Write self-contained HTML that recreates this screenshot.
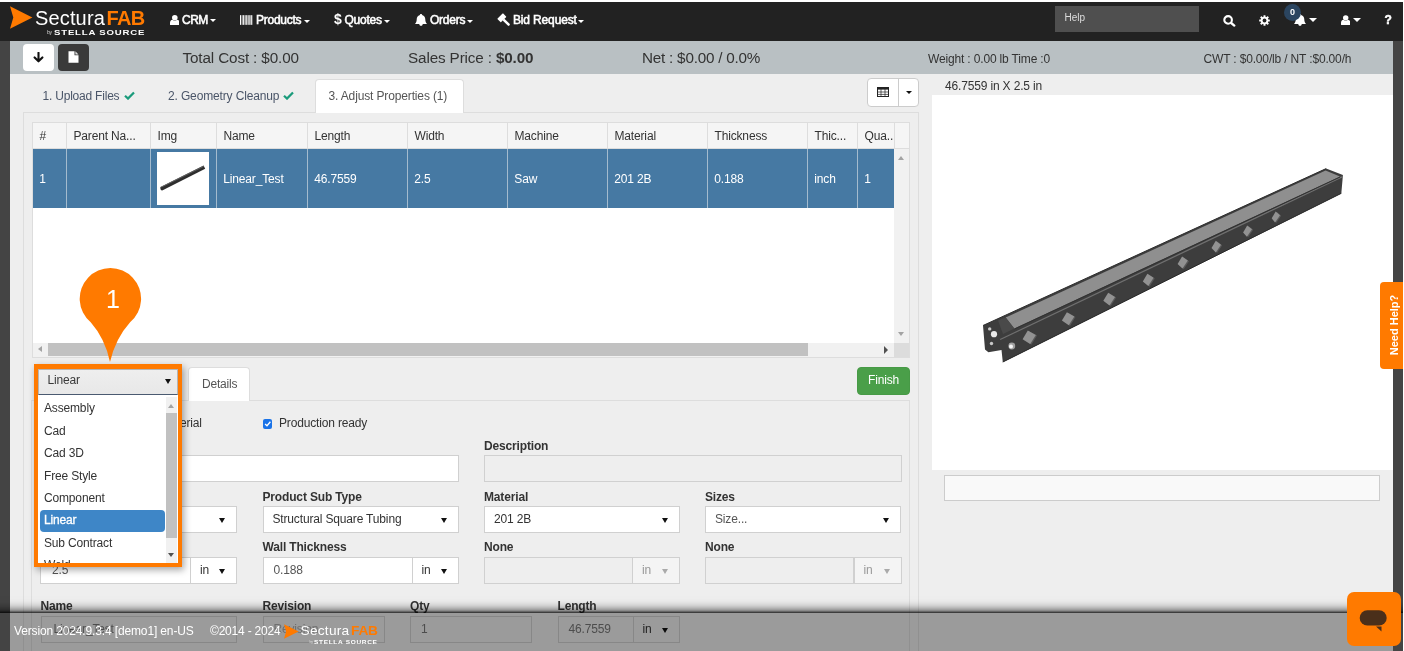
<!DOCTYPE html>
<html>
<head>
<meta charset="utf-8">
<title>SecturaFAB</title>
<style>
*{box-sizing:border-box;margin:0;padding:0}
html,body{width:1404px;height:651px;overflow:hidden;background:#fff}
body{font-family:"Liberation Sans",sans-serif;font-size:12px;color:#333;position:relative;letter-spacing:-0.16px}
.abs{position:absolute}
#page{position:absolute;left:0;top:2px;width:1403px;height:649px;background:#444;overflow:hidden}
#nav{position:absolute;left:0;top:0;width:1403px;height:39px;background:#222}
#main{position:absolute;left:10px;top:39px;width:1383px;height:610px;background:#eee}
#c{position:absolute;left:0;top:-2px;width:1403px;height:651px;overflow:hidden;will-change:transform}
#navc{position:absolute;left:0;top:0;width:1403px;height:39px;will-change:transform}
#bar{position:absolute;left:10px;top:41px;width:1383px;height:32.7px;background:#b9c0c3}
.navtxt{position:absolute;top:11px;color:#fff;font-size:12px;line-height:14px;letter-spacing:-0.25px;white-space:nowrap;-webkit-text-stroke:0.55px #fff}
.caret{position:absolute;width:0;height:0;border-left:3px solid transparent;border-right:3px solid transparent;border-top:3px solid #fff}
.bartxt{position:absolute;top:48.5px;font-size:15.25px;line-height:18px;color:#333;white-space:nowrap}
.bartxt2{position:absolute;top:51.8px;font-size:12px;line-height:14px;color:#333;white-space:nowrap}
.tab{position:absolute;font-size:12px;line-height:14px;color:#4a5568;white-space:nowrap;letter-spacing:-0.21px}
.lbl{position:absolute;font-weight:bold;font-size:12px;line-height:14px;color:#333;white-space:nowrap}
.inp{position:absolute;height:27px;border:1px solid #d0d0d0;background:#fff;font-size:12px;line-height:25px;color:#555;padding-left:10px;white-space:nowrap;overflow:hidden}
.inp.dis{background:#eee;color:#999}
.sel{position:absolute;height:27px;border:1px solid #d0d0d0;background:#fff;font-size:12px;line-height:25px;color:#333;padding-left:9px;white-space:nowrap;overflow:hidden}
.sel:after{content:"";position:absolute;right:11px;top:11px;border-left:3px solid transparent;border-right:3px solid transparent;border-top:5px solid #111}
.sel.dis{background:#f4f4f4;color:#999}
.sel.dis:after{border-top-color:#aaa}
.hd{position:absolute;top:0;height:26px;border-left:1px solid #ddd;font-size:12px;line-height:26px;padding-left:6.5px;color:#333;white-space:nowrap;overflow:hidden}
.cell{position:absolute;top:0;height:59px;border-left:1px solid #a4bbce;font-size:12px;line-height:61px;padding-left:6.3px;color:#fff;white-space:nowrap;overflow:hidden}
.opt{position:absolute;left:10px;font-size:12px;line-height:14px;color:#333;white-space:nowrap}
</style>
</head>
<body>
<div id="page">
<div id="nav"><div id="navc">
<svg class="abs" style="left:10px;top:4px" width="23" height="23" viewBox="0 0 23 23"><polygon points="0,0.3 22.4,11.4 0,22.7 3.3,11.4" fill="#ff7a00"/></svg>
<div class="abs" style="left:35px;top:3px;font-size:20px;line-height:26px;color:#fff;white-space:nowrap;letter-spacing:0.15px">Sectura<span style="color:#ff7a00;font-weight:bold;letter-spacing:-0.6px;margin-left:1.5px">FAB</span></div>
<div class="abs" style="left:47px;top:27px;font-size:5px;line-height:7px;color:#ddd">by</div>
<div class="abs" style="left:53.5px;top:26.3px;font-size:7.4px;line-height:9px;color:#fff;font-weight:bold;white-space:nowrap;transform-origin:0 0;transform:scaleX(1.3);letter-spacing:0.62px">STELLA SOURCE</div>

<svg class="abs" style="left:169.6px;top:12.7px" width="9.6" height="10.6" viewBox="0 0 10 11"><circle cx="5" cy="2.9" r="2.9" fill="#fff"/><path d="M0 9.6 L0 8.4 Q0 5.3 2.6 5 Q5 6.8 7.4 5 Q10 5.3 10 8.4 L10 9.6 Q10 11 8.4 11 L1.6 11 Q0 11 0 9.6Z" fill="#fff"/></svg>
<div class="navtxt" style="left:182px;letter-spacing:-0.5px">CRM</div>
<div class="caret" style="left:210px;top:17.3px"></div>

<svg class="abs" style="left:240.2px;top:12.8px" width="12.6" height="10" viewBox="0 0 13 10"><g fill="#fff"><rect x="0" y="0" width="1.2" height="10"/><rect x="1.9" y="0" width="0.7" height="10"/><rect x="3.2" y="0" width="1.3" height="10"/><rect x="5.1" y="0" width="0.7" height="10"/><rect x="6.4" y="0" width="1.3" height="10"/><rect x="8.3" y="0" width="0.7" height="10"/><rect x="9.6" y="0" width="1.3" height="10"/><rect x="11.5" y="0" width="1.2" height="10"/></g></svg>
<div class="navtxt" style="left:256px">Products</div>
<div class="caret" style="left:303.5px;top:17.5px"></div>

<div class="navtxt" style="left:334px;font-weight:bold;font-size:14px;top:10px;-webkit-text-stroke:0">$</div>
<div class="navtxt" style="left:344.5px">Quotes</div>
<div class="caret" style="left:384px;top:17.5px"></div>

<svg class="abs" style="left:414.6px;top:11.6px" width="12" height="12.4" viewBox="0 0 12 12.4"><path d="M6 0.1 C6.7 0.1 7.1 .5 7.1 1.1 C9.4 1.7 10.3 3.6 10.3 5.6 C10.3 7.6 10.9 8.8 12 9.9 L0 9.9 C1.1 8.8 1.7 7.6 1.7 5.6 C1.7 3.6 2.6 1.7 4.9 1.1 C4.9 .5 5.3 .1 6 .1Z" fill="#fff"/><path d="M4.2 10.1 L7.8 10.1 A1.8 1.8 0 0 1 4.2 10.1Z" fill="#fff"/></svg>
<div class="navtxt" style="left:430px">Orders</div>
<div class="caret" style="left:466.5px;top:17.5px"></div>

<svg class="abs" style="left:495px;top:9.3px;overflow:visible" width="17" height="16" viewBox="-2 -2 17 16"><g fill="#fff" transform="translate(1.6 1.6) rotate(-45 6 6)"><rect x="2" y="-0.4" width="8" height="5" rx="0.5"/><rect x="4.75" y="4.2" width="2.5" height="8.6" rx="1"/></g></svg>
<div class="navtxt" style="left:513px;letter-spacing:-0.15px">Bid Request</div>
<div class="caret" style="left:577.5px;top:17.5px"></div>

<div class="abs" style="left:1055px;top:4.4px;width:144px;height:25.2px;background:#4f4f4f"></div>
<div class="abs" style="left:1064.5px;top:9px;font-size:10px;line-height:14px;color:#ddd;letter-spacing:0">Help</div>

<svg class="abs" style="left:1222.8px;top:12.7px" width="13" height="12" viewBox="0 0 13 12"><circle cx="5.1" cy="4.9" r="3.8" fill="none" stroke="#fff" stroke-width="2.1"/><path d="M8.2 8 L11.3 10.6" stroke="#fff" stroke-width="2.3" stroke-linecap="round"/></svg>

<svg class="abs" style="left:1259px;top:12.8px" width="11" height="11" viewBox="0 0 12 12"><g fill="#fff"><circle cx="6" cy="6" r="4.1"/><g id="t"><rect x="4.9" y="0.2" width="2.2" height="11.6" rx="0.4"/></g><rect x="4.9" y="0.2" width="2.2" height="11.6" rx="0.4" transform="rotate(45 6 6)"/><rect x="4.9" y="0.2" width="2.2" height="11.6" rx="0.4" transform="rotate(90 6 6)"/><rect x="4.9" y="0.2" width="2.2" height="11.6" rx="0.4" transform="rotate(135 6 6)"/></g><circle cx="6" cy="6" r="2.1" fill="#222"/></svg>

<svg class="abs" style="left:1294px;top:11.8px" width="12" height="12.4" viewBox="0 0 12 12.4"><path d="M6 0.1 C6.7 0.1 7.1 .5 7.1 1.1 C9.4 1.7 10.3 3.6 10.3 5.6 C10.3 7.6 10.9 8.8 12 9.9 L0 9.9 C1.1 8.8 1.7 7.6 1.7 5.6 C1.7 3.6 2.6 1.7 4.9 1.1 C4.9 .5 5.3 .1 6 .1Z" fill="#fff"/><path d="M4.2 10.1 L7.8 10.1 A1.8 1.8 0 0 1 4.2 10.1Z" fill="#fff"/></svg>
<div class="abs" style="left:1284px;top:2px;width:17px;height:17px;border-radius:9px;background:#2b4560;color:#fff;font-size:9px;line-height:17px;text-align:center;font-weight:bold">0</div>
<div class="caret" style="left:1309.3px;top:16px;border-left-width:4px;border-right-width:4px;border-top-width:4px"></div>

<svg class="abs" style="left:1340.6px;top:12.7px" width="9.4" height="10.6" viewBox="0 0 10 11"><circle cx="5" cy="2.9" r="2.9" fill="#fff"/><path d="M0 9.6 L0 8.4 Q0 5.3 2.6 5 Q5 6.8 7.4 5 Q10 5.3 10 8.4 L10 9.6 Q10 11 8.4 11 L1.6 11 Q0 11 0 9.6Z" fill="#fff"/></svg>
<div class="caret" style="left:1352.5px;top:16px;border-left-width:4px;border-right-width:4px;border-top-width:4px"></div>

<div class="abs" style="left:1384.4px;top:11.2px;font-size:12px;line-height:14px;font-weight:bold;color:#fff;-webkit-text-stroke:0.5px #fff">?</div>
</div></div>
<div id="main"></div>
<div id="c">
<div id="bar"></div>
<div class="abs" style="left:23px;top:44px;width:31px;height:27px;background:#fff;border-radius:4px"></div>
<svg class="abs" style="left:33px;top:52px" width="11" height="11" viewBox="0 0 11 11"><path d="M5.5 0.8 L5.5 9 M1.6 5.4 L5.5 9.3 L9.4 5.4" fill="none" stroke="#111" stroke-width="2.1" stroke-linecap="round" stroke-linejoin="round"/></svg>
<div class="abs" style="left:58px;top:44px;width:31px;height:27px;background:#3a3a3a;border-radius:4px"></div>
<svg class="abs" style="left:68px;top:51px" width="11" height="12" viewBox="0 0 11 12"><path d="M0.5 0.3 L6.5 0.3 L6.5 4.2 L10.5 4.2 L10.5 11.7 L0.5 11.7Z" fill="#fff"/><path d="M7.4 0.3 L10.5 3.4 L7.4 3.4Z" fill="#ddd"/></svg>
<div class="bartxt" style="left:182.5px;letter-spacing:-0.13px">Total Cost : $0.00</div>
<div class="bartxt" style="left:408px;letter-spacing:-0.13px">Sales Price : <b style="letter-spacing:-0.2px">$0.00</b></div>
<div class="bartxt" style="left:642px;letter-spacing:-0.22px">Net : $0.00 / 0.0%</div>
<div class="bartxt2" style="left:928px">Weight : 0.00 lb Time :0</div>
<div class="bartxt2" style="left:1203.5px">CWT : $0.00/lb / NT :$0.00/h</div>

<!-- tabs -->
<div class="abs" style="left:23px;top:112px;width:896px;height:560px;border:1px solid #ddd;background:#eee"></div>
<div class="abs" style="left:315px;top:78.5px;width:149px;height:34.5px;border:1px solid #ddd;border-bottom:none;background:#fff;border-radius:4px 4px 0 0"></div>
<div class="tab" style="left:42.5px;top:89px">1. Upload Files</div>
<svg class="abs" style="left:123.5px;top:91px" width="11" height="9" viewBox="0 0 11 9"><path d="M1 4.8 L4 7.6 L10 1.4" fill="none" stroke="#1a9b7b" stroke-width="2.2"/></svg>
<div class="tab" style="left:168px;top:89px;letter-spacing:-0.14px">2. Geometry Cleanup</div>
<svg class="abs" style="left:282.5px;top:91px" width="11" height="9" viewBox="0 0 11 9"><path d="M1 4.8 L4 7.6 L10 1.4" fill="none" stroke="#1a9b7b" stroke-width="2.2"/></svg>
<div class="tab" style="left:328.5px;top:89px;color:#555;letter-spacing:-0.14px">3. Adjust Properties (1)</div>

<div class="abs" style="left:867px;top:78px;width:52px;height:29px;border:1px solid #ccc;background:#fff;border-radius:4px"></div>
<div class="abs" style="left:898px;top:79px;width:1px;height:27px;background:#ccc"></div>
<svg class="abs" style="left:877px;top:87px" width="12" height="10" viewBox="0 0 12 10"><rect x="0.5" y="0.5" width="11" height="9" fill="none" stroke="#222" stroke-width="1"/><rect x="0" y="0" width="12" height="2.6" fill="#222"/><path d="M0 5 H12 M0 7.4 H12 M4 2 V10 M8 2 V10" stroke="#222" stroke-width="0.7" fill="none"/></svg>
<div class="caret" style="left:905.5px;top:91px;border-top-color:#111"></div>

<!-- grid -->
<div class="abs" style="left:32px;top:122px;width:878px;height:236px;border:1px solid #ddd;background:#fff"></div>
<div class="abs" id="ghead" style="left:33px;top:123px;width:876px;height:26px;background:#f5f5f5;border-bottom:1px solid #ddd">
<div class="hd" style="left:0;width:33px;border-left:none">#</div>
<div class="hd" style="left:33px;width:84px">Parent Na...</div>
<div class="hd" style="left:117px;width:66px">Img</div>
<div class="hd" style="left:183px;width:91px">Name</div>
<div class="hd" style="left:274px;width:100px">Length</div>
<div class="hd" style="left:374px;width:100px">Width</div>
<div class="hd" style="left:474px;width:100px">Machine</div>
<div class="hd" style="left:574px;width:100px">Material</div>
<div class="hd" style="left:674px;width:100px">Thickness</div>
<div class="hd" style="left:774px;width:50px">Thic...</div>
<div class="hd" style="left:824px;width:37px">Qua..</div>
<div class="hd" style="left:861px;width:15px;padding:0"></div>
</div>
<div class="abs" id="grow" style="left:33px;top:149px;width:861px;height:59px;background:#4679a3">
<div class="cell" style="left:0;width:33px;border-left:none">1</div>
<div class="cell" style="left:33px;width:84px"></div>
<div class="cell" style="left:117px;width:66px"></div>
<div class="cell" style="left:183px;width:91px">Linear_Test</div>
<div class="cell" style="left:274px;width:100px">46.7559</div>
<div class="cell" style="left:374px;width:100px">2.5</div>
<div class="cell" style="left:474px;width:100px">Saw</div>
<div class="cell" style="left:574px;width:100px">201 2B</div>
<div class="cell" style="left:674px;width:100px">0.188</div>
<div class="cell" style="left:774px;width:50px">inch</div>
<div class="cell" style="left:824px;width:37px">1</div>
<div class="abs" style="left:124px;top:3px;width:52px;height:53px;background:#fff"></div>
<svg class="abs" style="left:124px;top:3px" width="52" height="53" viewBox="0 0 52 53"><path d="M3.4 35 L46.6 13.6 L48.2 16.8 L5.2 38.4 Q3 38.4 3.4 35Z" fill="#2e2e2e"/><path d="M4.5 35 L46.8 14.2" stroke="#777" stroke-width="0.7"/></svg>
</div>
<!-- vscroll -->
<div class="abs" style="left:894px;top:149px;width:15px;height:194px;background:#f1f1f1"></div>
<div class="abs" style="left:898px;top:156px;width:0;height:0;border-left:3.5px solid transparent;border-right:3.5px solid transparent;border-bottom:4px solid #a3a3a3"></div>
<div class="abs" style="left:898px;top:332px;width:0;height:0;border-left:3.5px solid transparent;border-right:3.5px solid transparent;border-top:4px solid #a3a3a3"></div>
<!-- hscroll -->
<div class="abs" style="left:33px;top:343px;width:876px;height:14px;background:#f1f1f1"></div>
<div class="abs" style="left:48px;top:343.4px;width:760px;height:12.6px;background:#c1c1c1"></div>
<div class="abs" style="left:38px;top:346px;width:0;height:0;border-top:3.5px solid transparent;border-bottom:3.5px solid transparent;border-right:4px solid #a3a3a3"></div>
<div class="abs" style="left:884px;top:346px;width:0;height:0;border-top:4px solid transparent;border-bottom:4px solid transparent;border-left:4.5px solid #505050"></div>
<div class="abs" style="left:894px;top:343px;width:15px;height:14px;background:#dcdcdc"></div>

<!-- right panel -->
<div class="abs" style="left:945px;top:78.8px;font-size:12px;line-height:14px;color:#333">46.7559 in X 2.5 in</div>
<div class="abs" style="left:931.5px;top:95px;width:461.5px;height:375px;background:#fff"></div>
<div class="abs" style="left:944px;top:475px;width:436px;height:26px;border:1px solid #ccc;background:#f9f9f9"></div>
<svg class="abs" style="left:931px;top:95px" width="462" height="375" viewBox="931 95 462 375">
<polygon points="983,325.5 1326.1,168.6 1342.9,175 1342.5,180 1341.3,193.5 1002.8,362.3 1001.5,350 988.4,352.2 985,349.5" fill="#3d3d3d"/>
<polygon points="1005.7,317.6 1325.6,170.6 1340,176.5 1014.3,328.6" fill="#8f8f8f"/>
<path d="M1000.2 339.5 L1342 176.8" stroke="#707070" stroke-width="1.3" fill="none"/>
<path d="M1014.3 329.1 L1340 177.1" stroke="#303030" stroke-width="0.9" fill="none"/>
<path d="M1002.8 362 L1341.3 193.3" stroke="#2a2a2a" stroke-width="1" fill="none"/>
<path d="M983 325.5 L1326.1 168.6" stroke="#2e2e2e" stroke-width="1" fill="none"/>
<polygon points="998,320.5 1005.7,317.6 1014.3,328.6 1003,334" fill="#4a4a4a"/>
<circle cx="989.7" cy="328.9" r="1.7" fill="#c8c8c8"/>
<circle cx="994" cy="334.2" r="3.1" fill="#e8e8e8"/>
<circle cx="991.5" cy="343.5" r="1.7" fill="#c8c8c8"/>
<circle cx="1011.8" cy="346" r="3.4" fill="#a0a0a0"/>
<circle cx="1011" cy="346.5" r="2" fill="#f4f4f4"/>
<polygon points="1029.0,331.2 1037.0,335.5 1031.4,344.7 1023.8,339.8" fill="#5a5a5a"/><polygon points="1027.8,330.6 1035.8,334.9 1030.2,344.1 1022.6,339.2" fill="#929292"/><polygon points="1068.1,312.8 1075.5,317.0 1070.0,325.9 1063.1,321.1" fill="#5a5a5a"/><polygon points="1066.9,312.2 1074.3,316.4 1068.8,325.3 1061.9,320.5" fill="#929292"/><polygon points="1109.4,293.4 1116.2,297.5 1110.7,306.1 1104.5,301.4" fill="#5a5a5a"/><polygon points="1108.2,292.8 1115.0,296.9 1109.5,305.5 1103.3,300.8" fill="#929292"/><polygon points="1148.6,274.4 1154.8,278.4 1149.5,286.7 1144.0,282.1" fill="#5a5a5a"/><polygon points="1147.4,273.8 1153.6,277.8 1148.3,286.1 1142.8,281.5" fill="#929292"/><polygon points="1183.3,257.2 1189.0,261.2 1183.7,269.2 1178.8,264.7" fill="#5a5a5a"/><polygon points="1182.1,256.6 1187.8,260.6 1182.5,268.6 1177.6,264.1" fill="#929292"/><polygon points="1217.0,241.4 1222.2,245.3 1217.0,253.0 1212.7,248.6" fill="#5a5a5a"/><polygon points="1215.8,240.8 1221.0,244.7 1215.8,252.4 1211.5,248.0" fill="#929292"/><polygon points="1248.4,226.1 1253.2,229.8 1248.1,237.3 1244.3,233.0" fill="#5a5a5a"/><polygon points="1247.2,225.5 1252.0,229.2 1246.9,236.7 1243.1,232.4" fill="#929292"/><polygon points="1276.9,212.1 1281.2,215.8 1276.2,223.1 1272.9,218.8" fill="#5a5a5a"/><polygon points="1275.7,211.5 1280.0,215.2 1275.0,222.5 1271.7,218.2" fill="#929292"/>
</svg>
<!-- need help -->
<div class="abs" style="left:1380px;top:282px;width:23.5px;height:87px;background:#ff7a00;border-radius:4px 0 0 4px"></div>
<div class="abs" style="left:1382.5px;top:281px;width:23px;height:87px"><div style="position:absolute;left:50%;top:50%;transform:translate(-50%,-50%) rotate(-90deg);white-space:nowrap;color:#fff;font-weight:bold;font-size:11px;letter-spacing:0">Need Help?</div></div>

<!-- lower tabs -->
<div class="abs" style="left:31px;top:400px;width:879px;height:280px;border:1px solid #ddd;background:#eee"></div>
<div class="abs" style="left:188px;top:366.5px;width:61.5px;height:34.5px;border:1px solid #ddd;border-bottom:none;background:#fff;border-radius:4px 4px 0 0"></div>
<div class="tab" style="left:202px;top:377px;color:#555">Details</div>
<div class="abs" style="left:857px;top:367px;width:53px;height:27.5px;background:#4a9f49;border:1px solid #479a46;border-radius:4px;color:#fff;font-size:12px;line-height:25px;text-align:center">Finish</div>

<!-- form -->
<div class="abs" style="left:180px;top:416px;font-size:12px;line-height:14px;color:#333">erial</div>
<div class="abs" style="left:262.7px;top:419px;width:9.5px;height:9.5px;background:#1a73e8;border-radius:2px"></div>
<svg class="abs" style="left:262.7px;top:419px" width="9.5" height="9.5" viewBox="0 0 10 10"><path d="M2.2 5.2 L4.2 7.1 L7.8 2.9" fill="none" stroke="#fff" stroke-width="1.4"/></svg>
<div class="abs" style="left:279px;top:415.5px;font-size:12px;line-height:14px;color:#333">Production ready</div>

<div class="inp" style="left:40px;top:455px;width:419px"></div>
<div class="lbl" style="left:484px;top:439.0px">Description</div>
<div class="inp dis" style="left:484px;top:455px;width:417.5px"></div>

<div class="sel" style="left:40px;top:506px;width:197px"></div>
<div class="lbl" style="left:262.5px;top:489.5px">Product Sub Type</div>
<div class="sel" style="left:262.5px;top:506px;width:196.5px">Structural Square Tubing</div>
<div class="lbl" style="left:484px;top:489.5px">Material</div>
<div class="sel" style="left:484px;top:506px;width:195.5px">201 2B</div>
<div class="lbl" style="left:705px;top:489.5px">Sizes</div>
<div class="sel" style="left:705px;top:506px;width:196px;color:#555">Size...</div>

<div class="inp" style="left:40px;top:556.5px;width:151px;padding-left:11px">2.5</div>
<div class="sel" style="left:190px;top:556.5px;width:47px">in</div>
<div class="lbl" style="left:262.5px;top:540.0px">Wall Thickness</div>
<div class="inp" style="left:262.5px;top:556.5px;width:150px">0.188</div>
<div class="sel" style="left:411.5px;top:556.5px;width:47.5px">in</div>
<div class="lbl" style="left:484px;top:540.0px">None</div>
<div class="inp dis" style="left:484px;top:556.5px;width:149px"></div>
<div class="sel dis" style="left:632px;top:556.5px;width:47.5px">in</div>
<div class="lbl" style="left:705px;top:540.0px">None</div>
<div class="inp dis" style="left:705px;top:556.5px;width:149px"></div>
<div class="sel dis" style="left:853.5px;top:556.5px;width:48px">in</div>

<div class="lbl" style="left:40.5px;top:599.0px">Name</div>
<div class="inp dis" style="left:40.5px;top:615.5px;width:196.5px;color:#777;padding-left:12px">Linear_Test</div>
<div class="lbl" style="left:262.5px;top:599.0px">Revision</div>
<div class="inp dis" style="left:262.5px;top:615.5px;width:122px;color:#aaa">Revision</div>
<div class="lbl" style="left:410px;top:599.0px">Qty</div>
<div class="inp dis" style="left:410px;top:615.5px;width:122px;color:#777">1</div>
<div class="lbl" style="left:557.5px;top:599.0px">Length</div>
<div class="inp dis" style="left:557.5px;top:615.5px;width:76px;color:#777">46.7559</div>
<div class="sel" style="left:632.5px;top:615.5px;width:47px;background:#eee">in</div>

<!-- pin -->
<svg class="abs" style="left:70px;top:260px" width="80" height="106" viewBox="70 260 80 106"><path d="M90.7 322.3 A30.7 30.7 0 1 1 130.1 322.3 Q115.5 338.5 110 362 Q105 338.5 90.7 322.3Z" fill="#ff7a00"/></svg>
<div class="abs" style="left:82.5px;top:285px;width:61px;text-align:center;color:#fff;font-size:25px;line-height:28px;letter-spacing:0">1</div>
<!-- orange box -->
<div class="abs" style="left:34px;top:364.3px;width:147.5px;height:202.4px;background:#ff7a00;box-shadow:2px 3px 7px rgba(0,0,0,.35)"></div>
<div class="abs" style="left:38px;top:368.5px;width:139.5px;height:194px;background:#fff;overflow:hidden">
 <div class="abs" style="left:0;top:0;width:139.5px;height:26px;background:linear-gradient(#eee,#e8e8e8);border:1px solid #b5b5b5;border-bottom:1.5px solid #4a5a70"></div>
</div>
<div class="abs" style="left:47.5px;top:373px;font-size:12px;line-height:14px;color:#3a3a3a">Linear</div>
<div class="abs" style="left:165px;top:379px;width:0;height:0;border-left:3px solid transparent;border-right:3px solid transparent;border-top:5px solid #111"></div>
<div class="abs" style="left:38px;top:395px;width:139.5px;height:167.5px;overflow:hidden">
<div class="abs" style="left:-38px;top:-395px"><div class="opt" style="left:44px;top:400.5px">Assembly</div><div class="opt" style="left:44px;top:423.5px">Cad</div><div class="opt" style="left:44px;top:446.0px">Cad 3D</div><div class="opt" style="left:44px;top:468.5px">Free Style</div><div class="opt" style="left:44px;top:491.0px">Component</div><div class="abs" style="left:39.5px;top:509.5px;width:125px;height:22.5px;background:#3e86c7;border-radius:4px"></div><div class="opt" style="left:44px;top:513.3px;color:#fff;-webkit-text-stroke:0.3px #fff">Linear</div><div class="opt" style="left:44px;top:535.8px">Sub Contract</div><div class="opt" style="left:44px;top:558.3px">Weld</div></div>
<div class="abs" style="left:128.3px;top:2px;width:11.2px;height:165.5px;background:#f1f1f1"></div>
<div class="abs" style="left:128.3px;top:18px;width:11.2px;height:124.5px;background:#c1c1c1"></div>
<div class="abs" style="left:130.4px;top:8.5px;width:0;height:0;border-left:3.5px solid transparent;border-right:3.5px solid transparent;border-bottom:4px solid #a3a3a3"></div>
<div class="abs" style="left:130.4px;top:158px;width:0;height:0;border-left:3.5px solid transparent;border-right:3.5px solid transparent;border-top:4px solid #505050"></div>
</div>


<div class="abs" style="left:-20px;top:612.5px;width:1443px;height:60px;background:rgba(0,0,0,.35);box-shadow:0 0 11px 1px rgba(0,0,0,.95),0 -1px 2px rgba(0,0,0,.7)"></div>
<div class="abs" style="left:14px;top:624px;font-size:12px;line-height:14px;color:#fff;letter-spacing:-0.14px;white-space:nowrap">Version 2024.9.3.4 [demo1] en-US</div>
<div class="abs" style="left:210px;top:624px;font-size:12px;line-height:14px;color:#fff;letter-spacing:-0.2px;white-space:nowrap">&copy;2014 - 2024</div>
<svg class="abs" style="left:283.6px;top:624.2px" width="15" height="15" viewBox="0 0 23 23"><polygon points="0,0.3 22.4,11.4 0,22.7 3.3,11.4" fill="#ff7a00"/></svg>
<div class="abs" style="left:300.5px;top:621.5px;font-size:13.7px;line-height:18px;color:#fff;white-space:nowrap;letter-spacing:0.25px">Sectura<span style="color:#ff7a00;font-weight:bold;letter-spacing:-0.2px;margin-left:1.6px">FAB</span></div>
<div class="abs" style="left:309.5px;top:639.5px;font-size:3.5px;line-height:5px;color:#ddd">by</div>
<div class="abs" style="left:313.6px;top:638.7px;font-size:5px;line-height:6px;color:#fff;font-weight:bold;white-space:nowrap;transform-origin:0 0;transform:scaleX(1.3);letter-spacing:0.53px">STELLA SOURCE</div>
<div class="abs" style="left:0;top:613px;width:10px;height:40px;background:#444"></div>
<div class="abs" style="left:1393px;top:613px;width:10px;height:40px;background:#444"></div>
<!-- chat -->
<div class="abs" style="left:1346.5px;top:592px;width:54px;height:54px;background:#ff7a00;border-radius:7px"></div>
<svg class="abs" style="left:1359px;top:609px" width="29" height="24" viewBox="0 0 29 24"><rect x="0.7" y="1.2" width="27" height="15.4" rx="7.7" fill="#4a2f1a"/><path d="M17 17.5 L22.5 17.5 L22.5 22.5Z" fill="#4a2f1a"/></svg>

<!--CONTENT--></div>
</div>
</body>
</html>
